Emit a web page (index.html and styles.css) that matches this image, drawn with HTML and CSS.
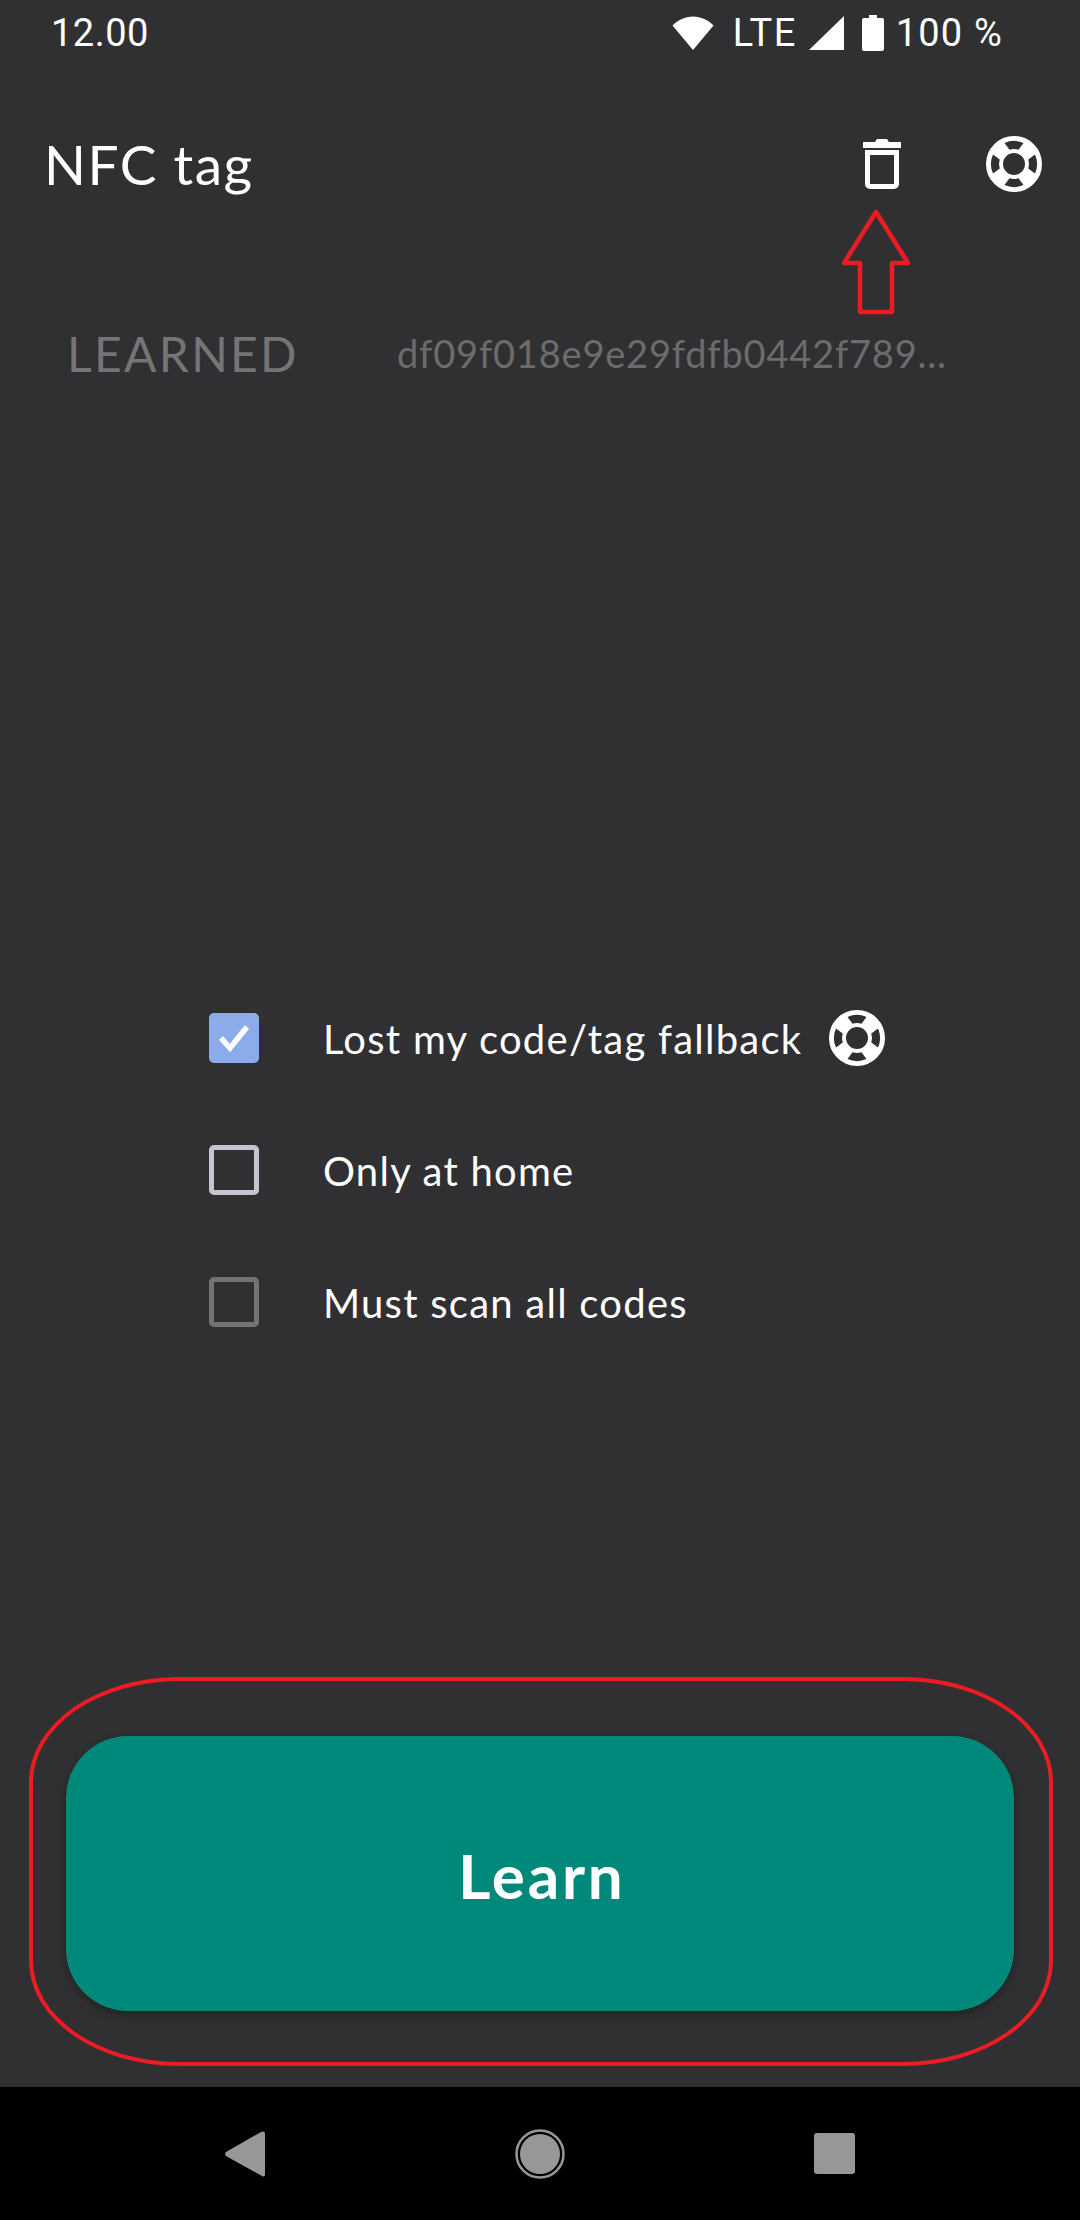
FILE: index.html
```html
<!DOCTYPE html>
<html>
<head>
    <title>NFC tag</title>
    <link rel="stylesheet" href="styles.css">
</head>
<body>
    <div id="screen">
        <div class="status-bar">
            <span class="clock">12.00</span>
            <div class="status-icons">
                <svg class="wifi" width="42" height="34" viewBox="0 0 42 34"><path d="M21 34 0.500 9.500C6 4 13 0.500 21 0.500s15 3.500 20.500 9z" fill="#fff"/></svg>
                <span class="lte">LTE</span>
                <svg class="signal" width="35" height="34" viewBox="0 0 35 34"><path d="M35 0V34H0z" fill="#fff"/></svg>
                <svg class="battery" width="22" height="36" viewBox="0 0 22 36"><path d="M7 0h8v3h5a2 2 0 0 1 2 2v29a2 2 0 0 1-2 2H2a2 2 0 0 1-2-2V5a2 2 0 0 1 2-2h5z" fill="#fff"/></svg>
                <span class="percent">100 %</span>
            </div>
        </div>

        <div class="app-bar">
            <h1 class="title">NFC tag</h1>
            <div class="actions">
                <svg class="trash" width="38" height="50" viewBox="0 0 38 50">
                    <path d="M0 3h12l2-3h10l2 3h12v6H0z" fill="#fff"/>
                    <path d="M4.500 13.500h29V45a2.500 2.500 0 0 1-2.500 2.500H7A2.500 2.500 0 0 1 4.500 45z" fill="none" stroke="#fff" stroke-width="5"/>
                </svg>
                <svg class="ring" width="56" height="56" viewBox="0 0 56 56"><use href="#ring-shape"/></svg>
            </div>
        </div>

        <div class="learned-row">
            <span class="learned-label">LEARNED</span>
            <span class="learned-code">df09f018e9e29fdfb0442f789...</span>
        </div>

        <div class="options">
            <div class="option">
                <span class="check checked">
                    <svg width="34" height="30" viewBox="0 0 34 30"><path d="M4 15 13 25 30 4" fill="none" stroke="#fff" stroke-width="5.500"/></svg>
                </span>
                <span class="option-text">Lost my code/tag fallback</span>
                <svg class="ring option-ring" width="56" height="56" viewBox="0 0 56 56"><use href="#ring-shape"/></svg>
            </div>
            <div class="option">
                <span class="check light"></span>
                <span class="option-text">Only at home</span>
            </div>
            <div class="option">
                <span class="check dim"></span>
                <span class="option-text">Must scan all codes</span>
            </div>
        </div>

        <div class="button-wrap">
            <button class="learn">Learn</button>
        </div>

        <div class="nav-bar">
            <svg width="40" height="46" viewBox="0 0 40 46"><path d="M38 0.500a2 2 0 0 1 2 1.500V44a2 2 0 0 1-3 1L1 25a3 3 0 0 1 0-4L36 1z" fill="#979797"/></svg>
            <svg width="50" height="50" viewBox="0 0 50 50"><circle cx="25" cy="25" r="23.500" fill="none" stroke="#979797" stroke-width="2.500"/><circle cx="25" cy="25" r="20" fill="#979797"/></svg>
            <span class="nav-square"></span>
        </div>

        <!-- red markup drawn over the screenshot -->
        <svg class="mark-arrow" width="72" height="108" viewBox="0 0 72 108"><path d="M36 3 68 54H52V103H20V54H4z" fill="none" stroke="#ed1c24" stroke-width="4.500" stroke-linejoin="round"/></svg>
        <div class="mark-oval"></div>
    </div>

    <svg class="defs" width="0" height="0">
        <defs>
            <g id="ring-shape">
                <circle cx="28" cy="28" r="19.500" fill="none" stroke="#fff" stroke-width="17"/>
                <g fill="#303032">
                    <path d="M18.500 7A23 23 0 0 1 37.500 7L32.500 13.700A15 15 0 0 0 23.500 13.700z"/>
                    <path d="M18.500 49A23 23 0 0 0 37.500 49L32.500 42.300A15 15 0 0 1 23.500 42.300z"/>
                    <path d="M7 18.500A23 23 0 0 0 7 37.500L13.700 32.500A15 15 0 0 1 13.700 23.500z"/>
                    <path d="M49 18.500A23 23 0 0 1 49 37.500L42.300 32.500A15 15 0 0 0 42.300 23.500z"/>
                </g>
            </g>
        </defs>
    </svg>
</body>
</html>
```

FILE: styles.css
```css
html, body {
    margin: 0;
    padding: 0;
}

body {
    background: #303032;
    font-family: Lato, "Open Sans", sans-serif;
    color: #fff;
}

#screen {
    position: relative;
    display: flex;
    flex-direction: column;
    width: 1080px;
    height: 2220px;
    overflow: hidden;
    background: #303032;
}

.defs {
    position: absolute;
}

.status-bar {
    display: flex;
    justify-content: space-between;
    align-items: center;
    height: 66px;
    padding: 0 77px 0 51px;
    font-family: Roboto, sans-serif;
    font-size: 38px;
}

.clock {
    letter-spacing: 0.5px;
}

.status-icons {
    display: flex;
    align-items: center;
}

.lte {
    margin-left: 19px;
    letter-spacing: 1.4px;
}

.signal {
    margin-left: 12px;
}

.battery {
    margin-left: 18px;
}

.percent {
    margin-left: 12px;
    letter-spacing: 1.2px;
}

.app-bar {
    display: flex;
    justify-content: space-between;
    align-items: center;
    height: 100px;
    margin-top: 48px;
    padding: 0 38px 0 44px;
}

.title {
    margin: 0;
    font-size: 55px;
    font-weight: 400;
    letter-spacing: 1.5px;
}

.actions {
    display: flex;
    align-items: center;
    gap: 85px;
}

.learned-row {
    display: flex;
    align-items: center;
    height: 70px;
    margin-top: 104px;
    padding-left: 67px;
}

.learned-label {
    width: 330px;
    font-size: 48px;
    letter-spacing: 2.3px;
    color: #757575;
}

.learned-code {
    font-size: 38px;
    letter-spacing: 0.8px;
    color: #6c6c6c;
}

.options {
    display: flex;
    flex-direction: column;
    gap: 72px;
    margin-top: 620px;
    padding-left: 209px;
}

.option {
    display: flex;
    align-items: center;
    height: 60px;
}

.check {
    display: flex;
    justify-content: center;
    align-items: center;
    box-sizing: border-box;
    width: 50px;
    height: 50px;
    border-radius: 5px;
}

.check.checked {
    background: #8cabeb;
}

.check.light {
    border: 5px solid #c3c5d0;
}

.check.dim {
    border: 5px solid #737375;
}

.option-text {
    margin-left: 64px;
    padding-top: 2px;
    font-size: 40px;
    letter-spacing: 1.25px;
}

.option-ring {
    margin-left: 27px;
}

.button-wrap {
    margin-top: 404px;
    padding: 0 66px;
}

.learn {
    display: block;
    width: 100%;
    height: 275px;
    padding-top: 4px;
    border: 0;
    border-radius: 62px;
    background: #00897b;
    box-shadow: 0 4px 10px rgba(0, 0, 0, 0.3);
    color: #fff;
    font-family: inherit;
    font-size: 62px;
    font-weight: 700;
    letter-spacing: 2.8px;
    text-indent: 4px;
}

.nav-bar {
    display: flex;
    align-items: center;
    position: absolute;
    left: 0;
    right: 0;
    bottom: 0;
    justify-content: space-between;
    height: 133px;
    padding: 0 225px;
    box-sizing: border-box;
    background: #000;
}

.nav-square {
    width: 41px;
    height: 41px;
    border-radius: 3px;
    background: #979797;
}

.mark-arrow {
    position: absolute;
    left: 840px;
    top: 209px;
}

.mark-oval {
    position: absolute;
    left: 29px;
    top: 1677px;
    width: 1024px;
    height: 389px;
    box-sizing: border-box;
    border: 4px solid #ed1c24;
    border-radius: 150px / 105px;
}
```
